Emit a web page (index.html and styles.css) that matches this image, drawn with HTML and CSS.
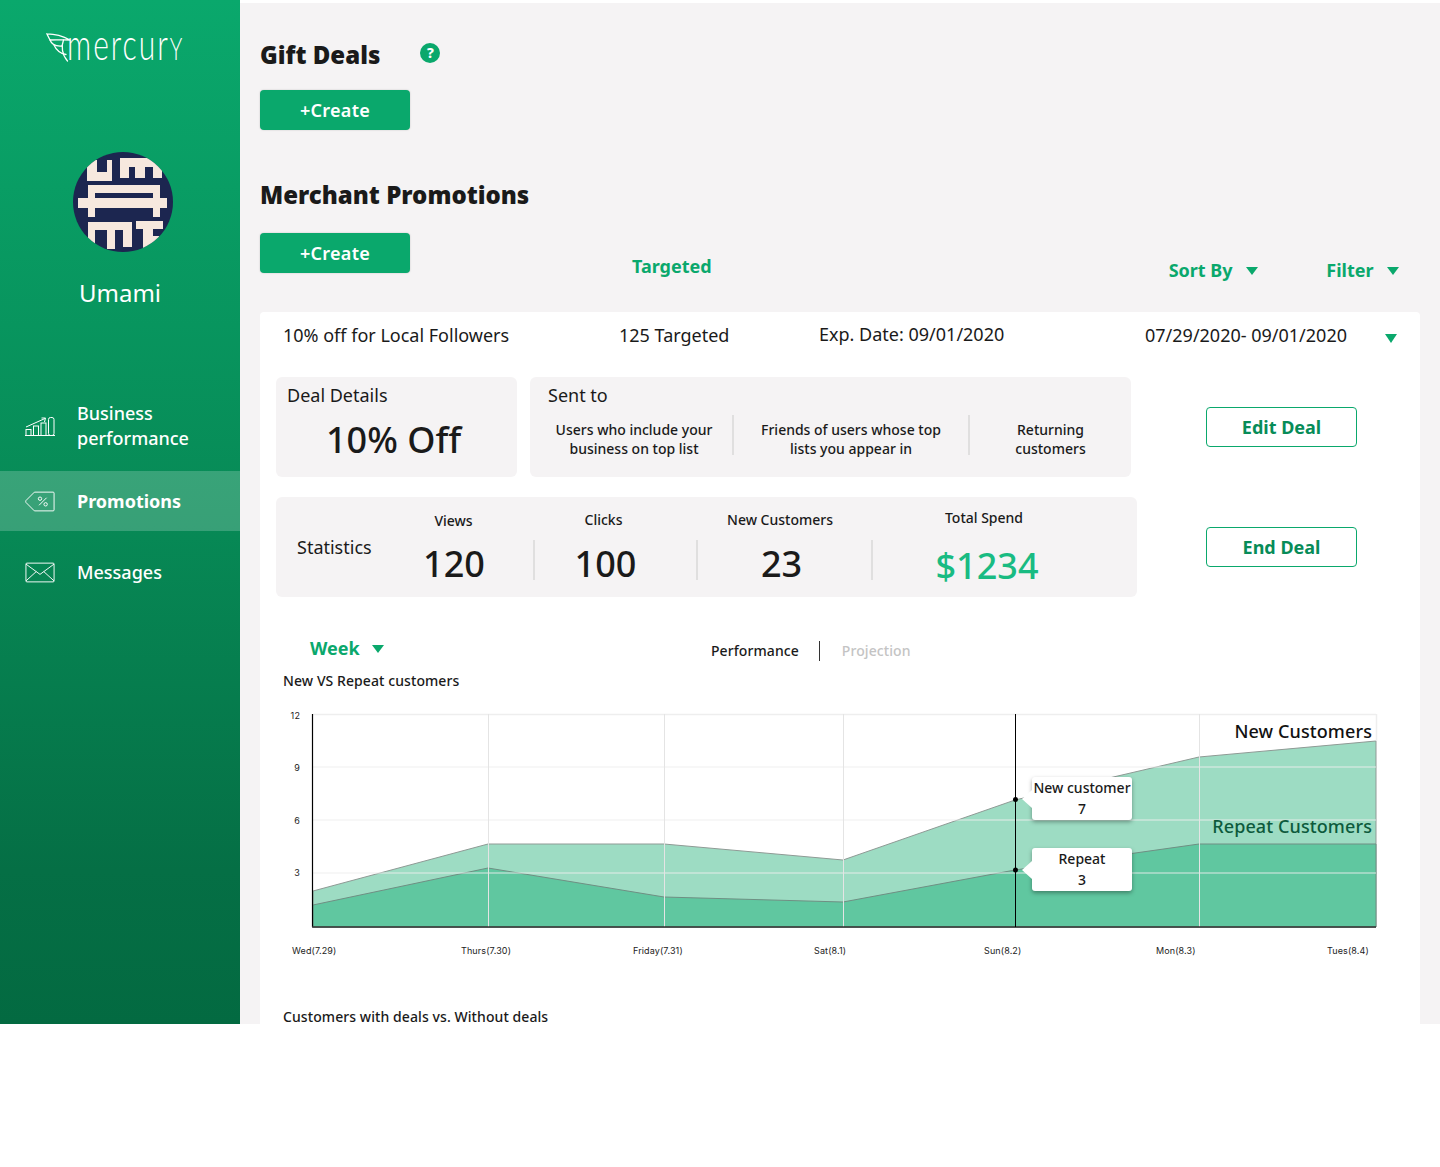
FILE: index.html
```html
<!DOCTYPE html>
<html lang="en">
<head>
    <meta charset="UTF-8">
    <meta name="viewport" content="width=device-width, initial-scale=1.0">
    <title>Promotions</title>
    <link rel="stylesheet" href="styles.css">
</head>
<body>
    <div class="app">
        <aside class="sidebar">
            <div class="logo">
                <svg class="wing" viewBox="0 0 26 29" width="26" height="29" fill="none" stroke="#fff" stroke-width="1.300" stroke-linejoin="round" stroke-linecap="round">
                    <path d="M0.800 0.800 C9 0.800 17 3 24 7 C18 6.500 10 7 4 7 L0.800 0.800"/>
                    <path d="M4 7 C5.500 11 10 13.500 16 13"/>
                    <path d="M8 12 C10 17 15 21 20 21.500"/>
                    <path d="M17.500 7 C15 13 16 22 21.500 28"/>
                </svg>
                <span class="logo-text">mercur<span class="logo-y">y</span></span>
            </div>
            <svg class="avatar" viewBox="0 0 100 100" width="100" height="100">
                <clipPath id="avatarClip"><circle cx="50" cy="50" r="50"/></clipPath>
                <g clip-path="url(#avatarClip)">
                    <rect width="100" height="100" fill="#1c2650"/>
                    <g fill="#f6e8de">
                        <path d="M14 8 H24 V20 H34 V8 H39 V29 H14 Z"/>
                        <path d="M47 6 H89 V26 H80 V15 H72 V26 H62 V15 H56 V26 H47 Z"/>
                        <path d="M15 33 H87 V46 H94 V56 H87 V65 H80 V56 H22 V65 H15 V56 H5 V46 H15 Z M22 41 V46 H80 V41 Z" fill-rule="evenodd"/>
                        <path d="M15 70 H59 V95 H50 V78 H42 V97 H34 V78 H22 V94 H15 Z"/>
                        <path d="M63 69 H90 V77 H80 V84 H86 V90 H80 V98 H70 V77 H63 Z"/>
                    </g>
                </g>
            </svg>
            <div class="brand-name">Umami</div>
            <nav class="side-nav">
                <a class="nav-item nav-tall">
                    <svg viewBox="0 0 30 19" width="30" height="19" fill="none" stroke="#fff" stroke-width="1">
                        <rect x="1" y="12.500" width="5" height="6"/><rect x="8.500" y="9" width="5" height="9.500"/><rect x="16" y="6" width="5" height="12.500"/><rect x="23.500" y="0.500" width="5.500" height="18" rx="2"/>
                        <path d="M1 10 L20 1.500 M16.500 1 L20.500 1 L19.500 5 M0 18.500 H30"/>
                    </svg>
                    <span>Business<br>performance</span>
                </a>
                <a class="nav-item nav-active">
                    <svg viewBox="0 0 32 22" width="30" height="21" fill="none" stroke="#fff" stroke-width="1">
                        <path d="M10 1 H30 Q31 1 31 2 V20 Q31 21 30 21 H10 L1 12 Q0.500 11 1 10 Z"/>
                        <path d="M15 15 L23 7" />
                        <circle cx="16" cy="8" r="1.800"/><circle cx="22" cy="14" r="1.800"/>
                    </svg>
                    <span>Promotions</span>
                </a>
                <a class="nav-item">
                    <svg viewBox="0 0 32 22" width="30" height="21" fill="none" stroke="#fff" stroke-width="1">
                        <rect x="1" y="1" width="30" height="20" rx="1"/>
                        <path d="M1 2 L16 13 L31 2 M1 20 L12 10 M31 20 L20 10"/>
                    </svg>
                    <span>Messages</span>
                </a>
            </nav>
        </aside>

        <main class="content">
            <div class="title-row">
                <h2>Gift Deals</h2>
                <span class="help">?</span>
            </div>
            <button class="create-btn">+Create</button>

            <h2 class="promo-title">Merchant Promotions</h2>
            <div class="toolbar">
                <button class="create-btn">+Create</button>
                <span class="targeted">Targeted</span>
                <span class="dropdown sort">Sort By <i class="caret"></i></span>
                <span class="dropdown filter">Filter <i class="caret"></i></span>
            </div>

            <section class="card">
                <div class="deal-head">
                    <span class="col-name">10% off for Local Followers</span>
                    <span class="col-target">125 Targeted</span>
                    <span class="col-exp">Exp. Date: 09/01/2020</span>
                    <span class="col-range">07/29/2020- 09/01/2020</span>
                    <i class="caret caret-big"></i>
                </div>

                <div class="deal-row">
                    <div class="box box-deal">
                        <div class="box-label">Deal Details</div>
                        <div class="deal-value">10% Off</div>
                    </div>
                    <div class="box box-sent">
                        <div class="box-label">Sent to</div>
                        <div class="sent-list">
                            <div class="sent-a">Users who include your<br>business on top list</div>
                            <div class="sent-b">Friends of users whose top<br>lists you appear in</div>
                            <div class="sent-c">Returning<br>customers</div>
                        </div>
                    </div>
                    <button class="outline-btn">Edit Deal</button>
                </div>

                <div class="stats-row">
                    <div class="box box-stats">
                        <div class="stats-label">Statistics</div>
                        <div class="stat stat-views"><span>Views</span><b>120</b></div>
                        <div class="stat stat-clicks"><span>Clicks</span><b>100</b></div>
                        <div class="stat stat-new"><span>New Customers</span><b>23</b></div>
                        <div class="stat stat-spend"><span>Total Spend</span><b>$1234</b></div>
                    </div>
                    <button class="outline-btn">End Deal</button>
                </div>

                <div class="chart-controls">
                    <span class="week">Week <i class="caret"></i></span>
                    <span class="tab tab-on">Performance</span>
                    <span class="tab tab-off">Projection</span>
                </div>
                <h4 class="chart-title">New VS Repeat customers</h4>

                <div class="chart">
                    <svg viewBox="276 700 1128 260" width="1128" height="260">
                        <polygon points="313,891 488,844 664,844 843,860 1015,800 1199,757 1376,741 1376,927 313,927" fill="#9ddcc3" stroke="#8f9a95"/>
                        <polygon points="313,905 488,868 664,897 843,902 1015,870 1199,844 1376,844 1376,927 313,927" fill="#60c7a0" stroke="#6f8f83"/>
                        <path d="M313 767 H1376 M313 820 H1376 M313 873 H1376" stroke="#eee" stroke-width="1.500" stroke-opacity="0.600"/>
                        <path d="M313 714.500 H1376 M1376.500 714 V741" stroke="#eee" stroke-width="1.500"/>
                        <path d="M488.500 714 V927 M664.500 714 V927 M843.500 714 V927 M1199.500 714 V927" stroke="#e4e4e4" stroke-width="1"/>
                        <path d="M312.500 714 V927" stroke="#000" stroke-width="1.200"/>
                        <path d="M312 927 H1376" stroke="#333" stroke-width="1.500"/>
                        <path d="M1015.500 714 V927" stroke="#000" stroke-width="1"/>
                        <g class="axis-text">
                            <text x="300" y="718.500" text-anchor="end">12</text>
                            <text x="300" y="771" text-anchor="end">9</text>
                            <text x="300" y="823.500" text-anchor="end">6</text>
                            <text x="300" y="875.500" text-anchor="end">3</text>
                            <text x="292" y="954">Wed(7.29)</text>
                            <text x="461" y="954">Thurs(7.30)</text>
                            <text x="633" y="954">Friday(7.31)</text>
                            <text x="814" y="954">Sat(8.1)</text>
                            <text x="984" y="954">Sun(8.2)</text>
                            <text x="1156" y="954">Mon(8.3)</text>
                            <text x="1327" y="954">Tues(8.4)</text>
                        </g>
                        <text class="legend" x="1372" y="738" text-anchor="end">New Customers</text>
                        <text class="legend legend-dark" x="1372" y="833" text-anchor="end">Repeat Customers</text>
                        <circle cx="1015.500" cy="799.500" r="2.500" fill="#000"/>
                        <circle cx="1015.500" cy="870" r="2.500" fill="#000"/>
                    </svg>
                    <div class="tip tip-new">New customer<br>7</div>
                    <div class="tip tip-repeat">Repeat<br>3</div>
                </div>

                <h4 class="chart-title title-second">Customers with deals vs. Without deals</h4>
            </section>
        </main>
    </div>
</body>
</html>
```

FILE: styles.css
```css
* {
    box-sizing: border-box;
}
body {
    margin: 0;
    background-color: #fff;
    font-family: "Noto Sans", "Open Sans", sans-serif;
    color: #1a1a1a;
}
.app {
    display: flex;
    height: 1024px;
}
button {
    font-family: inherit;
    cursor: pointer;
}

/* sidebar */
.sidebar {
    width: 240px;
    flex-shrink: 0;
    padding-top: 33px;
    color: #fff;
    background: linear-gradient(180deg, #0aa86c 0%, #078a56 50%, #056f45 85%, #036a41 100%);
}
.logo {
    display: flex;
    align-items: flex-start;
    height: 29px;
    margin-left: 46px;
}
.wing {
    flex-shrink: 0;
    margin-right: -5px;
}
.logo-text {
    font-family: "Lato", sans-serif;
    font-weight: 300;
    font-size: 30px;
    line-height: 30px;
    letter-spacing: 2px;
    white-space: nowrap;
    transform: scaleY(1.45);
    transform-origin: left top;
    margin-top: -12px;
}
.logo-y {
    font-size: 21px;
    text-transform: uppercase;
}
.avatar {
    display: block;
    margin: 90px 0 0 73px;
}
.brand-name {
    margin-top: 25px;
    text-align: center;
    font-size: 24px;
    line-height: 32px;
}
.side-nav {
    margin-top: 82px;
}
.nav-item {
    display: flex;
    align-items: center;
    height: 60px;
    padding-left: 25px;
    font-size: 18px;
    line-height: 25px;
    font-weight: 500;
}
.nav-item svg {
    margin-right: 22px;
    flex-shrink: 0;
}
.nav-tall {
    height: 70px;
    margin-bottom: 10px;
}
.nav-active {
    background-color: rgba(255, 255, 255, 0.2);
    font-weight: 700;
    margin-bottom: 11px;
}

/* main area */
.content {
    flex: 1;
    margin-top: 3px;
    padding: 0 20px;
    background-color: #f5f3f4;
}
h2 {
    margin: 0;
    font-size: 24px;
    line-height: 33px;
    font-weight: 900;
}
.title-row {
    display: flex;
    align-items: center;
    height: 33px;
    margin-top: 35px;
}
.help {
    width: 20px;
    height: 20px;
    margin: -3px 0 0 40px;
    border-radius: 50%;
    background-color: #0aa86c;
    color: #fff;
    font-size: 14px;
    font-weight: 800;
    line-height: 20px;
    text-align: center;
}
.create-btn {
    display: block;
    width: 150px;
    height: 40px;
    margin-top: 19px;
    border: none;
    border-radius: 4px;
    background-color: #0aa86c;
    box-shadow: 0 0 2px rgba(0, 0, 0, 0.2);
    color: #fff;
    font-size: 18px;
    font-weight: 600;
    letter-spacing: 0.3px;
}
.promo-title {
    margin-top: 48px;
}
.toolbar {
    display: flex;
    height: 83px;
    font-size: 18px;
    font-weight: 700;
    color: #0aa86c;
}
.toolbar .create-btn {
    margin-top: 22px;
    flex-shrink: 0;
}
.targeted {
    margin: 43px 0 0 222px;
    line-height: 25px;
}
.dropdown {
    line-height: 25px;
    margin-top: 47px;
}
.dropdown .caret {
    margin-left: 9px;
}
.sort {
    margin-left: 457px;
}
.filter {
    margin-left: 68px;
}
.caret {
    display: inline-block;
    width: 0;
    height: 0;
    margin-left: 8px;
    vertical-align: 2px;
    border-left: 6.500px solid transparent;
    border-right: 6.500px solid transparent;
    border-top: 8px solid #0aa86c;
}

/* deal card */
.card {
    height: 712px;
    margin-top: 18px;
    padding: 0 16px;
    background-color: #fff;
    border-radius: 4px 4px 0 0;
}
.deal-head {
    display: flex;
    align-items: center;
    height: 46px;
    font-size: 18px;
    line-height: 25px;
    padding-left: 7px;
}
.col-name {
    width: 336px;
}
.col-target {
    width: 200px;
}
.col-exp {
    width: 326px;
    margin-top: -2px;
}
.col-range {
    width: 240px;
}
.caret-big {
    margin: 6px 0 0 0;
    border-top-width: 9px;
}
.deal-row {
    display: flex;
    margin-top: 19px;
}
.box {
    height: 100px;
    background-color: #f5f3f4;
    border-radius: 6px;
}
.box-label {
    font-size: 18px;
    line-height: 25px;
}
.box-deal {
    width: 241px;
    padding: 6px 0 0 11px;
}
.deal-value {
    margin: 7px 0 0 39px;
    font-size: 36px;
    line-height: 49px;
    font-weight: 500;
}
.box-sent {
    width: 601px;
    margin-left: 13px;
    padding: 6px 0 0 18px;
}
.sent-list {
    display: flex;
    margin: 7px 0 0 -18px;
    font-size: 14px;
    line-height: 19px;
    font-weight: 500;
    text-align: center;
}
.sent-list div {
    height: 40px;
    padding-top: 5px;
}
.sent-a {
    width: 204px;
    padding-left: 6px;
    border-right: 2px solid #e0dfdf;
}
.sent-b {
    width: 236px;
    border-right: 2px solid #e0dfdf;
}
.sent-c {
    width: 161px;
}
.outline-btn {
    width: 151px;
    height: 40px;
    margin: 30px 0 0 75px;
    border: 1px solid #0aa86c;
    border-radius: 4px;
    background-color: #fff;
    color: #078c58;
    font-size: 18px;
    font-weight: 700;
}
.stats-row {
    display: flex;
    margin-top: 20px;
}
.box-stats {
    display: flex;
    width: 861px;
}
.stats-row .outline-btn {
    margin-left: 69px;
}
.stats-label {
    width: 116px;
    padding: 38px 0 0 21px;
    font-size: 18px;
    line-height: 25px;
}
.stat {
    display: flex;
    flex-direction: column;
    padding-top: 13px;
    text-align: center;
    font-size: 14px;
    line-height: 19px;
    font-weight: 500;
}
.stat b {
    height: 40px;
    margin-top: 11px;
    font-size: 36px;
    line-height: 47px;
    font-weight: 500;
    border-right: 2px solid #e0dfdf;
}
.stat-views {
    width: 143px;
    padding-top: 14px;
}
.stat-views span {
    padding-right: 20px;
}
.stat-views b {
    padding-right: 17px;
    margin-top: 10px;
}
.stat-clicks {
    width: 163px;
}
.stat-clicks span {
    padding-right: 26px;
}
.stat-clicks b {
    padding-right: 20px;
}
.stat-new {
    width: 175px;
}
.stat-new span {
    padding-right: 11px;
}
.stat-new b {
    padding-right: 6px;
}
.stat-spend {
    width: 230px;
    padding-top: 11px;
}
.stat-spend span {
    padding-right: 8px;
}
.stat-spend b {
    margin-top: 13px;
    padding-right: 2px;
    line-height: 51px;
    border-right: none;
    color: #19bb82;
}

/* chart */
.chart-controls {
    display: flex;
    align-items: center;
    height: 30px;
    margin-top: 39px;
    padding-left: 34px;
}
.week {
    width: 401px;
    font-size: 18px;
    font-weight: 700;
    color: #0aa86c;
    margin-top: -6px;
}
.tab {
    font-size: 14px;
    line-height: 20px;
    font-weight: 500;
    letter-spacing: 0.08px;
}
.tab-on {
    padding-right: 20px;
    border-right: 1px solid #333;
}
.tab-off {
    padding-left: 22px;
    color: #c4c4c4;
}
.chart-title {
    margin: 5px 0 0 7px;
    font-size: 14px;
    line-height: 19px;
    font-weight: 500;
    letter-spacing: 0.08px;
}
.chart {
    position: relative;
    margin-top: 10px;
    height: 260px;
}
.chart svg {
    display: block;
}
.axis-text text {
    font-family: "Inter", sans-serif;
    font-size: 9px;
    letter-spacing: 0.12px;
    fill: #222;
}
.legend {
    font-size: 18px;
    font-weight: 500;
    letter-spacing: 0.1px;
    fill: #111;
}
.legend-dark {
    fill: #0d5a3c;
}
.tip {
    position: absolute;
    left: 756px;
    width: 100px;
    height: 43px;
    border-radius: 3px;
    background-color: #fff;
    box-shadow: 0 2px 4px rgba(0, 0, 0, 0.35);
    text-align: center;
    font-size: 14px;
    line-height: 21px;
    font-weight: 500;
    white-space: nowrap;
}
.tip::before {
    content: "";
    position: absolute;
    left: -10px;
    top: 13px;
    width: 0;
    height: 0;
    border-top: 9px solid transparent;
    border-bottom: 9px solid transparent;
    border-right: 10px solid #fff;
}
.tip-new {
    top: 77px;
}
.tip-repeat {
    top: 148px;
}
.title-second {
    margin-top: 50px;
    line-height: 14px;
}
```
